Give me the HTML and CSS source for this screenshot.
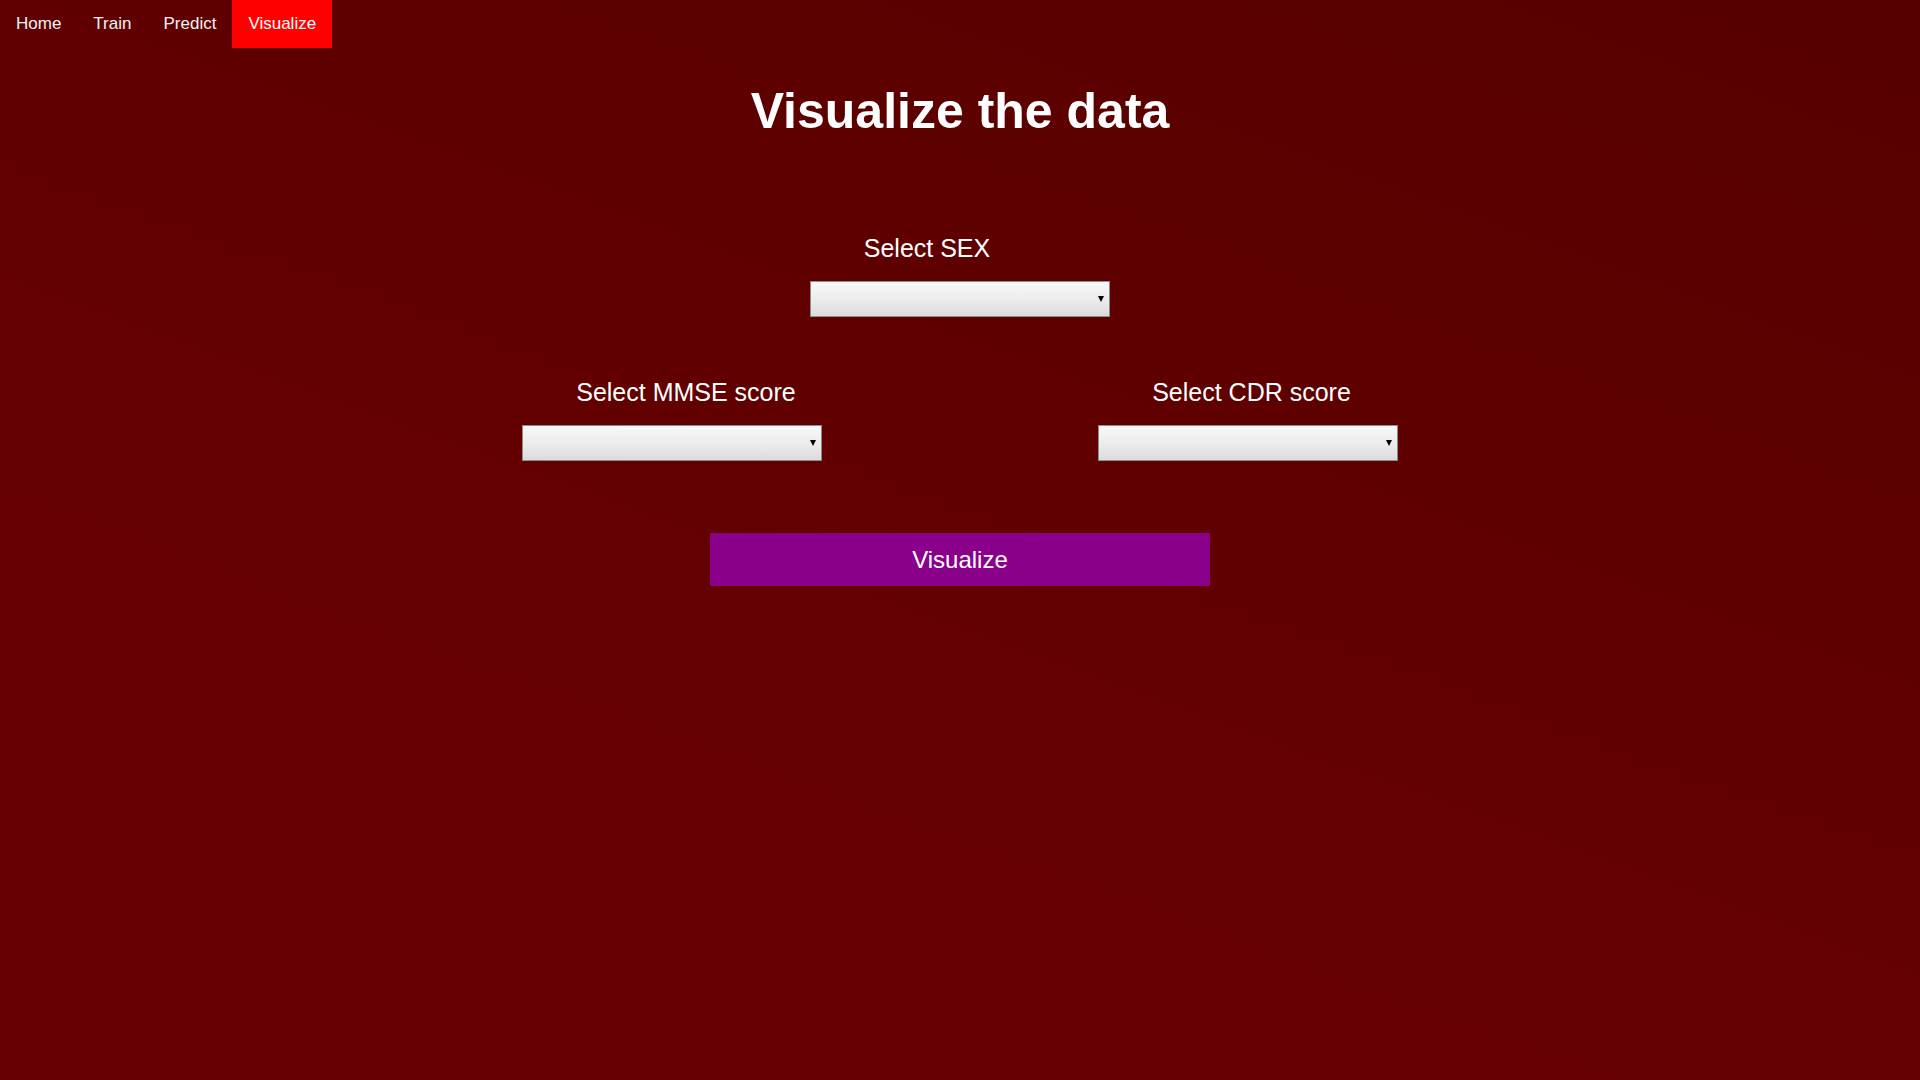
FILE: index.html
```html
<!DOCTYPE html>
<html lang="en">
<head>
<meta charset="utf-8">
<title>Visualize the data</title>
<link rel="stylesheet" href="styles.css">
</head>
<body>
<nav class="topnav">
  <a href="#" class="nav-link">Home</a>
  <a href="#" class="nav-link">Train</a>
  <a href="#" class="nav-link">Predict</a>
  <a href="#" class="nav-link active">Visualize</a>
</nav>
<main class="content">
  <h1 class="title">Visualize the data</h1>
  <form class="viz-form">
    <div class="field field-sex">
      <label class="field-label label-sex" for="sex">Select SEX</label>
      <span class="select-wrap"><select id="sex" class="select-box"></select></span>
    </div>
    <div class="score-row">
      <div class="field">
        <label class="field-label label-mmse" for="mmse">Select MMSE score</label>
        <span class="select-wrap"><select id="mmse" class="select-box"></select></span>
      </div>
      <div class="field">
        <label class="field-label label-cdr" for="cdr">Select CDR score</label>
        <span class="select-wrap"><select id="cdr" class="select-box"></select></span>
      </div>
    </div>
    <button type="button" class="viz-button">Visualize</button>
  </form>
</main>
</body>
</html>
```

FILE: styles.css
```css
html, body {
  margin: 0;
  padding: 0;
  height: 100%;
}

body {
  font-family: "Liberation Sans", Arial, sans-serif;
  color: #ffffff;
  background: linear-gradient(200deg, #560000 0%, #5f0000 35%, #660000 70%, #660000 100%);
  min-height: 1080px;
}

.topnav {
  display: flex;
  height: 48px;
}

.nav-link {
  display: block;
  padding: 14px 16px;
  font-size: 17px;
  line-height: 20px;
  color: #f2f2f2;
  text-decoration: none;
}

.nav-link.active {
  background: #ff0000;
  color: #ffffff;
}

.content {
  display: flex;
  flex-direction: column;
  align-items: center;
}

.title {
  margin: 35px 0 0;
  font-size: 50px;
  line-height: 57px;
  font-weight: bold;
  text-align: center;
}

.viz-form {
  display: flex;
  flex-direction: column;
  align-items: center;
  margin-top: 94px;
  width: 100%;
}

.field {
  display: flex;
  flex-direction: column;
  align-items: center;
}

.field-label {
  font-size: 25px;
  line-height: 28px;
  margin-bottom: 19px;
}

.label-sex {
  margin-right: 66px;
}

.label-mmse {
  margin-left: 28px;
}

.label-cdr {
  margin-left: 7px;
}

.score-row {
  display: grid;
  grid-template-columns: 576px 576px;
  margin-top: 61px;
}

.select-wrap {
  position: relative;
  display: block;
  width: 300px;
  height: 36px;
}

.select-wrap::after {
  content: "";
  position: absolute;
  right: 6px;
  top: 15px;
  border-left: 3px solid transparent;
  border-right: 3px solid transparent;
  border-top: 6px solid #000000;
  pointer-events: none;
}

.select-box {
  appearance: none;
  -webkit-appearance: none;
  display: block;
  width: 300px;
  height: 36px;
  margin: 0;
  padding: 0 8px;
  border: 1px solid #8c8c8c;
  border-radius: 0;
  background: linear-gradient(to bottom, #f8f8f8 0%, #ececec 50%, #dcdcdc 100%);
  font-family: "Liberation Sans", Arial, sans-serif;
  font-size: 16px;
}

.viz-button {
  margin-top: 72px;
  width: 500px;
  height: 53px;
  border: none;
  background: #8b008b;
  color: #ffffff;
  font-family: "Liberation Sans", Arial, sans-serif;
  font-size: 24px;
  cursor: pointer;
}
```
